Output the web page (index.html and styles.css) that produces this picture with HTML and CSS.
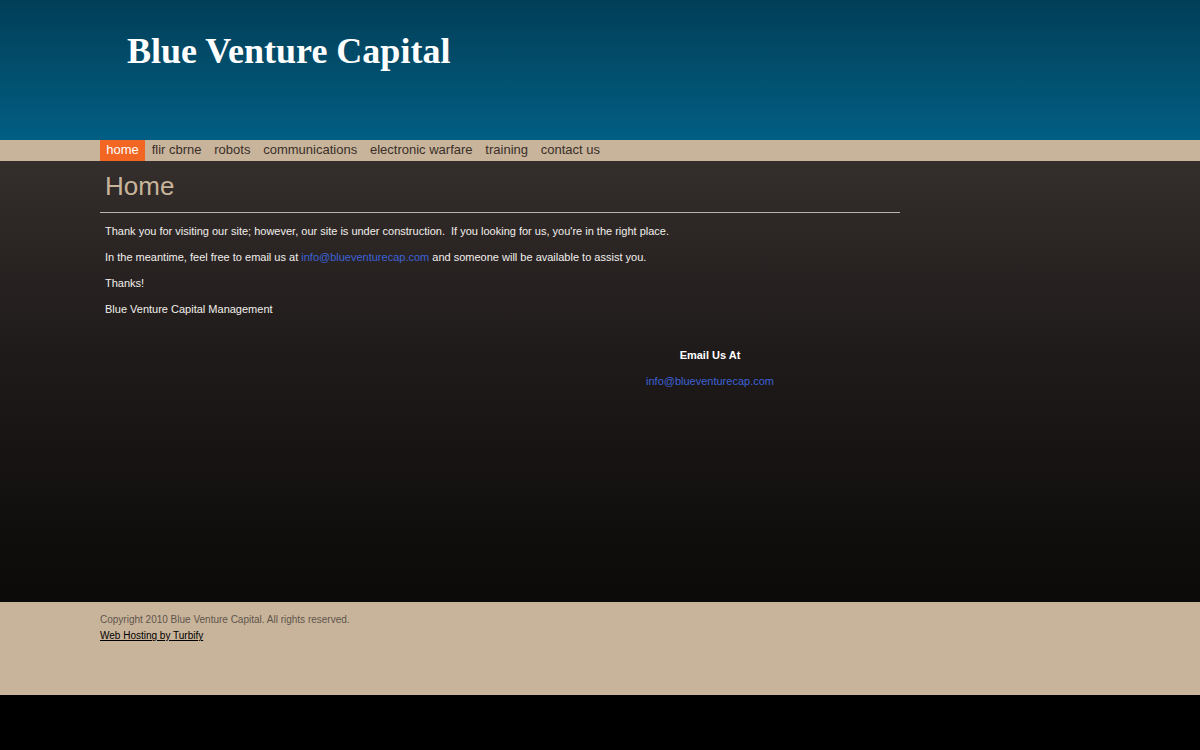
FILE: index.html
```html
<!DOCTYPE html>
<html>
<head>
<meta charset="utf-8">
<title>Blue Venture Capital</title>
<link rel="stylesheet" href="styles.css">
</head>
<body>
<header class="header">
  <div class="wrap">
    <h1 class="site-title">Blue Venture Capital</h1>
  </div>
</header>
<nav class="nav">
  <ul class="wrap nav-list">
    <li><a class="nav-link active" href="#">home</a></li>
    <li><a class="nav-link" href="#">flir cbrne</a></li>
    <li><a class="nav-link" href="#">robots</a></li>
    <li><a class="nav-link" href="#">communications</a></li>
    <li><a class="nav-link" href="#">electronic warfare</a></li>
    <li><a class="nav-link" href="#">training</a></li>
    <li><a class="nav-link" href="#">contact us</a></li>
  </ul>
</nav>
<main class="main">
  <div class="wrap content">
    <h2 class="page-title">Home</h2>
    <div class="body-text">
      <p>Thank you for visiting our site; however, our site is under construction.&nbsp; If you looking for us, you're in the right place.</p>
      <p>In the meantime, feel free to email us at <a class="link" href="#">info@blueventurecap.com</a> and someone will be available to assist you.</p>
      <p>Thanks!</p>
      <p>Blue Venture Capital Management</p>
    </div>
    <div class="email-box">
      <p class="email-title">Email Us At</p>
      <p><a class="link" href="#">info@blueventurecap.com</a></p>
    </div>
  </div>
</main>
<footer class="footer">
  <div class="wrap">
    <p class="copy">Copyright 2010 Blue Venture Capital. All rights reserved.</p>
    <p class="hosting"><a href="#">Web Hosting by Turbify</a></p>
  </div>
</footer>
</body>
</html>
```
FILE: styles.css
```css
html, body {
  margin: 0;
  padding: 0;
  background: #000;
  font-family: "Liberation Sans", Arial, sans-serif;
}
.wrap {
  width: 1000px;
  margin: 0 0 0 100px;
  box-sizing: border-box;
}
.header {
  height: 140px;
  background: linear-gradient(to bottom, #013e58 0%, #02506f 55%, #015e84 100%);
}
.header .wrap {
  padding: 31px 0 0 27px;
}
.site-title {
  margin: 0;
  font-family: "Liberation Serif", "Times New Roman", serif;
  font-weight: bold;
  font-size: 36px;
  line-height: 40px;
  color: #fff;
}
.nav {
  height: 21px;
  background: #c8b49b;
}
.nav-list {
  list-style: none;
  padding: 0;
  margin-top: 0;
  margin-bottom: 0;
  display: flex;
  height: 21px;
}
.nav-link {
  display: block;
  height: 21px;
  line-height: 20px;
  padding: 0 6.5px 0 6.3px;
  font-size: 13px;
  color: #3a2f28;
  text-decoration: none;
}
.nav-link.active {
  background: #f26522;
  color: #fff;
}
.main {
  height: 441px;
  background: linear-gradient(to bottom, #342e2c 0%, #1e1a19 45%, #0b0a09 100%);
}
.content {
  width: 800px;
  padding-top: 10px;
}
.page-title {
  margin: 0 0 0 5px;
  font-weight: normal;
  font-size: 26px;
  line-height: 30px;
  color: #c8b49b;
  padding-bottom: 11px;
}
.body-text {
  border-top: 1px solid #bdb5ad;
  margin: 0;
  padding: 12px 0 0 5px;
}
.body-text p, .email-box p {
  margin: 0 0 13px 0;
  font-size: 11px;
  line-height: 13px;
  color: #f2efec;
}
.link {
  color: #3d62d6;
  text-decoration: none;
}
.email-box {
  width: 180px;
  margin: 33px 0 0 520px;
  text-align: center;
}
.email-box .email-title {
  font-weight: bold;
  color: #fff;
}
.footer {
  height: 93px;
  background: #c8b49b;
}
.footer .wrap {
  padding-top: 11px;
}
.footer p {
  margin: 0 0 3px 0;
  font-size: 10px;
  line-height: 13px;
}
.copy {
  color: #5f554b;
}
.hosting a {
  color: #000;
  text-decoration: underline;
}
```
